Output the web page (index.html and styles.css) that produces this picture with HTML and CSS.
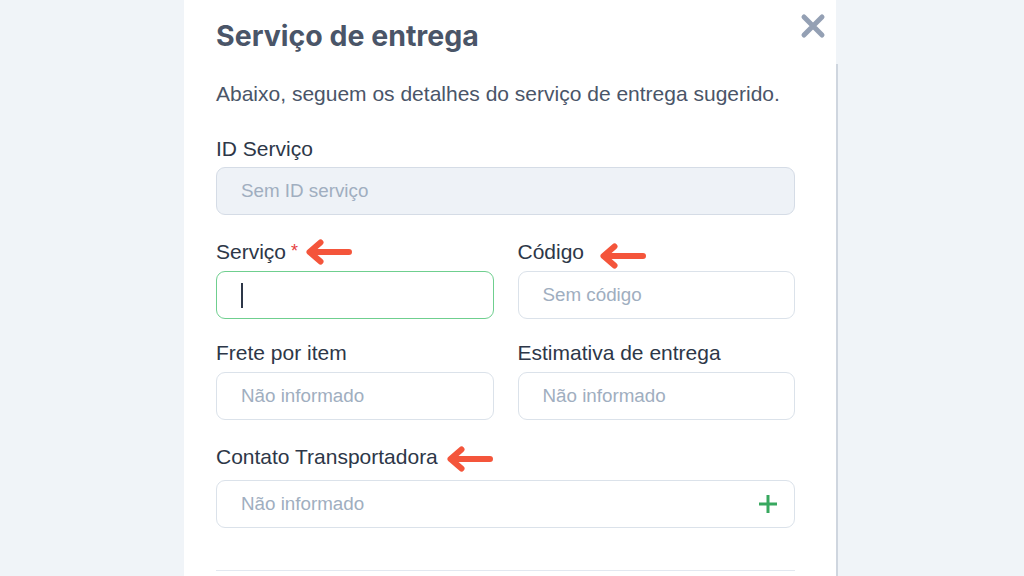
FILE: index.html
```html
<!DOCTYPE html>
<html lang="pt-BR">
<head>
<meta charset="utf-8">
<title>Serviço de entrega</title>
<link rel="stylesheet" href="styles.css">
</head>
<body>
<div class="modal">
  <div class="scroll-thumb"></div>
  <button class="close" aria-label="Fechar">
    <svg viewBox="0 0 26 26" width="26" height="26"><path d="M4 4 L22 22 M22 4 L4 22" stroke="#94a0b4" stroke-width="5" stroke-linecap="round" fill="none"/></svg>
  </button>
  <h1 class="title">Serviço de entrega</h1>
  <p class="desc">Abaixo, seguem os detalhes do serviço de entrega sugerido.</p>

  <div class="field first">
    <label class="label">ID Serviço</label>
    <div class="input disabled"><span class="ph">Sem ID serviço</span></div>
  </div>

  <div class="row">
    <div class="field">
      <label class="label">Serviço <span class="req">*</span><svg class="arrow a1" viewBox="0 0 50 26" width="50" height="26"><path d="M46 13 H8 M17.5 3.5 L6.5 13 L17.5 22.5" stroke="#f4553b" stroke-width="6" stroke-linecap="round" stroke-linejoin="round" fill="none"/></svg></label>
      <div class="input focus"><span class="caret"></span></div>
    </div>
    <div class="field">
      <label class="label">Código<svg class="arrow a2" viewBox="0 0 50 26" width="50" height="26"><path d="M46 13 H8 M17.5 3.5 L6.5 13 L17.5 22.5" stroke="#f4553b" stroke-width="6" stroke-linecap="round" stroke-linejoin="round" fill="none"/></svg></label>
      <div class="input"><span class="ph">Sem código</span></div>
    </div>
  </div>

  <div class="row second">
    <div class="field">
      <label class="label">Frete por item</label>
      <div class="input"><span class="ph">Não informado</span></div>
    </div>
    <div class="field">
      <label class="label">Estimativa de entrega</label>
      <div class="input"><span class="ph">Não informado</span></div>
    </div>
  </div>

  <div class="field contact">
    <label class="label">Contato Transportadora<svg class="arrow a3" viewBox="0 0 50 26" width="50" height="26"><path d="M46 13 H8 M17.5 3.5 L6.5 13 L17.5 22.5" stroke="#f4553b" stroke-width="6" stroke-linecap="round" stroke-linejoin="round" fill="none"/></svg></label>
    <div class="input"><span class="ph">Não informado</span>
      <svg class="plus" viewBox="0 0 22 22" width="22" height="22"><path d="M11 2 V20 M2 11 H20" stroke="#38a85f" stroke-width="3" fill="none"/></svg>
    </div>
  </div>

  <div class="divider"></div>
</div>
</body>
</html>
```

FILE: styles.css
```css
html, body {
  margin: 0;
  padding: 0;
  height: 100%;
  overflow: hidden;
}
body {
  background: #f0f4f8;
  font-family: "Liberation Sans", Arial, sans-serif;
}
.modal {
  position: relative;
  margin-left: 184px;
  width: 579px;
  height: 576px;
  background: #ffffff;
  padding: 18px 41px 0 32px;
  box-sizing: content-box;
}
.scroll-thumb {
  position: absolute;
  left: 652px;
  top: 64px;
  width: 2px;
  height: 512px;
  background: #cfd6df;
}
.close {
  position: absolute;
  left: 615px;
  top: 12px;
  width: 28px;
  height: 28px;
  padding: 1px;
  border: 0;
  background: none;
}
.title {
  margin: 0;
  font-family: Inter, "Liberation Sans", sans-serif;
  font-weight: 700;
  font-size: 28.5px;
  line-height: 36px;
  color: #4a5568;
}
.desc {
  margin: 28px 0 0;
  font-size: 21px;
  line-height: 24px;
  color: #4a5568;
}
.field {
  display: flex;
  flex-direction: column;
}
.field.first {
  margin-top: 31px;
}
.row {
  display: grid;
  grid-template-columns: 1fr 1fr;
  column-gap: 24px;
  margin-top: 25px;
}
.row.second {
  margin-top: 22px;
}
.label {
  display: flex;
  align-items: center;
  font-size: 21px;
  line-height: 24px;
  height: 24px;
  color: #2d3748;
  margin-bottom: 7px;
}
.first .label {
  margin-bottom: 6px;
}
.req {
  color: #e53e3e;
  font-size: 18px;
  margin-left: 5px;
  align-self: flex-start;
  line-height: 22px;
}
.arrow {
  display: block;
  flex: none;
}
.a1 { margin-left: 5px; }
.a2 { margin-left: 13px; margin-top: 8px; }
.a3 { margin-left: 6px; margin-top: 4px; }
.input {
  position: relative;
  display: flex;
  align-items: center;
  height: 46px;
  border: 1px solid #dbe2ea;
  border-radius: 9px;
  padding: 0 24px;
  background: #fff;
}
.input.disabled {
  background: #eef2f7;
  border-color: #d5dce6;
}
.input.focus {
  border-color: #6fcf8f;
}
.ph {
  font-size: 18.8px;
  color: #a0aec0;
}
.caret {
  display: block;
  width: 1.5px;
  height: 25px;
  background: #2d3748;
}
.contact {
  margin-top: 25px;
}
.contact .label {
  margin-bottom: 11px;
}
.plus {
  position: absolute;
  right: 15px;
  top: 12px;
}
.divider {
  margin-top: 42px;
  height: 1px;
  background: #e2e8f0;
}
```
